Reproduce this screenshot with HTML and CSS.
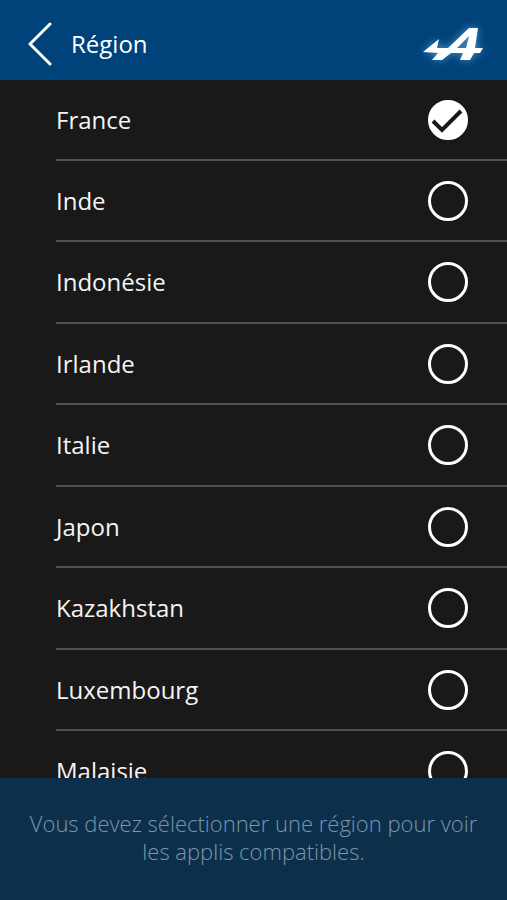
FILE: index.html
```html
<!DOCTYPE html>
<html lang="fr">
<head>
<meta charset="utf-8">
<meta name="viewport" content="width=device-width, initial-scale=1">
<title>Région</title>
<link rel="stylesheet" href="styles.css">
</head>
<body>
<header class="bar">
  <button class="back" type="button" aria-label="Retour">
    <svg width="24" height="46" viewBox="0 0 24 46" fill="none" stroke="currentColor" stroke-width="3" stroke-linecap="round" stroke-linejoin="round"><path d="M22 3 2 23 22 43"/></svg>
  </button>
  <h1 class="title">Région</h1>
  <svg class="logo" width="60" height="34" viewBox="0 0 60 34" fill="currentColor" role="img" aria-label="Alpine">
    <path fill-rule="evenodd" d="M0 25 16 12 14 21H25L46 1H55L52 21H60L57 26H51L47 33H37L40 26H28L19 33H9L15 26ZM34 21H43L46 9Z"/>
  </svg>
</header>
<main class="list">
  <label class="row"><span>France</span><span class="pick"><input type="radio" name="region" checked><svg class="tick" viewBox="0 0 40 40"><path d="M5 21 14 30 33 11"/></svg></span></label>
  <label class="row"><span>Inde</span><span class="pick"><input type="radio" name="region"><svg class="tick" viewBox="0 0 40 40"><path d="M5 21 14 30 33 11"/></svg></span></label>
  <label class="row"><span>Indonésie</span><span class="pick"><input type="radio" name="region"><svg class="tick" viewBox="0 0 40 40"><path d="M5 21 14 30 33 11"/></svg></span></label>
  <label class="row"><span>Irlande</span><span class="pick"><input type="radio" name="region"><svg class="tick" viewBox="0 0 40 40"><path d="M5 21 14 30 33 11"/></svg></span></label>
  <label class="row"><span>Italie</span><span class="pick"><input type="radio" name="region"><svg class="tick" viewBox="0 0 40 40"><path d="M5 21 14 30 33 11"/></svg></span></label>
  <label class="row"><span>Japon</span><span class="pick"><input type="radio" name="region"><svg class="tick" viewBox="0 0 40 40"><path d="M5 21 14 30 33 11"/></svg></span></label>
  <label class="row"><span>Kazakhstan</span><span class="pick"><input type="radio" name="region"><svg class="tick" viewBox="0 0 40 40"><path d="M5 21 14 30 33 11"/></svg></span></label>
  <label class="row"><span>Luxembourg</span><span class="pick"><input type="radio" name="region"><svg class="tick" viewBox="0 0 40 40"><path d="M5 21 14 30 33 11"/></svg></span></label>
  <label class="row"><span>Malaisie</span><span class="pick"><input type="radio" name="region"><svg class="tick" viewBox="0 0 40 40"><path d="M5 21 14 30 33 11"/></svg></span></label>
</main>
<footer class="note">
  <p>Vous devez sélectionner une région pour voir les applis compatibles.</p>
</footer>
</body>
</html>
```
FILE: styles.css
```css
* {
  box-sizing: border-box;
}

body {
  margin: 0;
  height: 100vh;
  display: flex;
  flex-direction: column;
  background: #191919;
  color: #f4f4f4;
  font-family: "Open Sans", "Noto Sans", sans-serif;
  font-size: 24px;
  line-height: 32px;
}

.bar {
  flex: none;
  display: flex;
  align-items: center;
  padding: 8px 24px 0 28px;
  height: 80px;
  background: #00427a;
  color: #fff;
}

.back {
  display: flex;
  margin: 0 19px 0 0;
  padding: 0;
  border: 0;
  background: none;
  color: inherit;
}

.title {
  margin: 0;
  font-size: 24px;
  font-weight: 500;
}

.logo {
  margin-left: auto;
  overflow: visible;
  filter: drop-shadow(0 0 4px #4a94c8);
}

.list {
  flex: 1;
  min-height: 0;
  padding-left: 56px;
  overflow-y: auto;
  scrollbar-width: none;
}

.row {
  display: flex;
  align-items: center;
  justify-content: space-between;
  height: 81px;
  padding-right: 39px;
  border-bottom: 2px solid #505050;
  font-weight: 500;
}

.row:nth-child(2n + 3) {
  height: 82px;
}

.pick {
  display: grid;
}

.pick > * {
  grid-area: 1 / 1;
  width: 40px;
  height: 40px;
}

.pick input {
  appearance: none;
  margin: 0;
  border: 3px solid #fff;
  border-radius: 50%;
}

.pick input:checked {
  background: #fff;
}

.tick {
  visibility: hidden;
  pointer-events: none;
  fill: none;
  stroke: #191919;
  stroke-width: 4;
}

input:checked + .tick {
  visibility: visible;
}

.note {
  flex: none;
  padding: 31px 28px 35px;
  background: #0c304c;
  color: #7d95ab;
  font-size: 22px;
  font-weight: 300;
  line-height: 28px;
  text-align: center;
}

.note p {
  margin: 0;
}
```
